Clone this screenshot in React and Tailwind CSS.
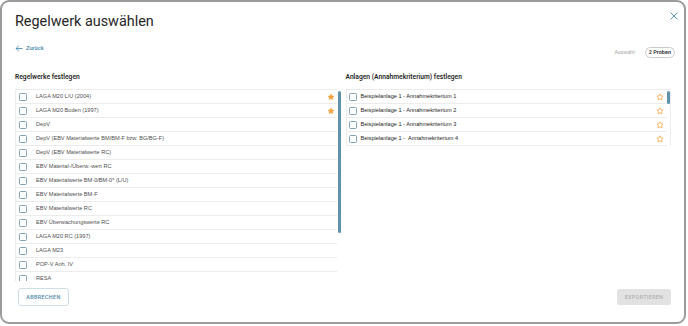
import React from "react";

// Dialog: Regelwerk auswählen

const REGELWERKE = [
  { name: "LAGA M20 L/U (2004)", fav: true },
  { name: "LAGA M20 Boden (1997)", fav: true },
  { name: "DepV" },
  { name: "DepV (EBV Materialwerte BM/BM-F bzw. BG/BG-F)" },
  { name: "DepV (EBV Materialwerte RC)" },
  { name: "EBV Material-/Überw.-wert RC" },
  { name: "EBV Materialwerte BM-0/BM-0* (L/U)" },
  { name: "EBV Materialwerte BM-F" },
  { name: "EBV Materialwerte RC" },
  { name: "EBV Überwachungswerte RC" },
  { name: "LAGA M20 RC (1997)" },
  { name: "LAGA M23" },
  { name: "POP-V Anh. IV" },
  { name: "RESA" },
];

const ANLAGEN = [
  "Beispielanlage 1 - Annahmekriterium 1",
  "Beispielanlage 1 - Annahmekriterium 2",
  "Beispielanlage 1 - Annahmekriterium 3",
  "Beispielanlage 1 - \u00a0Annahmekriterium 4",
];

const rowFont = { fontFamily: "'Liberation Sans', Arial, sans-serif" };

function Star({ filled }) {
  return (
    <svg width="8" height="8" viewBox="0 0 24 24" className="shrink-0">
      <path
        d="M12 2.5l2.9 6.1 6.6.8-4.9 4.6 1.3 6.6L12 17.3l-5.9 3.3 1.3-6.6-4.9-4.6 6.6-.8z"
        fill={filled ? "#f5a23e" : "none"}
        stroke="#f5a23e"
        strokeWidth={filled ? 1 : 2.2}
        strokeLinejoin="round"
      />
    </svg>
  );
}

function Checkbox() {
  return <span className="block h-[8px] w-[8px] shrink-0 rounded-[1.5px] border-[1.3px] border-[#7fa2b6] bg-white" />;
}

export default function App() {
  return (
    <div className="h-[326px] w-[688px] bg-white" style={{ fontFamily: "Roboto, 'Liberation Sans', sans-serif" }}>
      <div className="flex h-[324px] w-[686px] flex-col rounded-[9px] border-2 border-[#9b9b9b] bg-white px-[13px]">
        {/* Kopfzeile */}
        <div className="flex h-[40px] items-start justify-between">
          <h1 className="pt-[12px] text-[14.4px] leading-[16px] font-normal text-[#262626]">Regelwerk auswählen</h1>
          <svg width="8" height="8" viewBox="0 0 10 10" className="-mr-[7px] mt-[10px]">
            <path d="M1 1l8 8M9 1l-8 8" stroke="#4f97ac" strokeWidth="1.2" strokeLinecap="round" />
          </svg>
        </div>

        <div className="flex h-[16px] items-start justify-between">
          <div className="flex h-[12px] items-center gap-[3px] text-[5.7px] font-medium text-[#3f84ad]">
            <svg width="8" height="7" viewBox="0 0 10 8">
              <path d="M9 4H1.5M4.5 1L1.3 4l3.2 3" stroke="#3f84ad" strokeWidth="1" fill="none" strokeLinecap="round" strokeLinejoin="round" />
            </svg>
            Zurück
          </div>
          <div className="-mr-[4px] flex items-center gap-[9px] self-end">
            <span className="text-[5.3px] text-[#a5a5a5]">Auswahl:</span>
            <span className="flex h-[11px] items-center rounded-full border border-[#c9c9c9] px-[3px] text-[5.5px] font-semibold text-[#333]">2 Proben</span>
          </div>
        </div>

        <div className="mt-[14px] grid grid-cols-2 gap-[5px]">
          {/* Regelwerke */}
          <div>
            <h2 className="text-[6.7px] leading-[10px] font-semibold text-[#2a2a2a]">Regelwerke festlegen</h2>
            <div className="mt-[7px] flex h-[192px] overflow-hidden">
              <div className="flex-1 border-l border-t border-[#ececec]">
                {REGELWERKE.map((r) => (
                  <div key={r.name} className="flex h-[14px] items-center border-b border-[#ececec] pr-[2px] pl-[3px]">
                    <Checkbox />
                    <span className="ml-[9px] flex-1 text-[5.6px] text-[#505050]" style={rowFont}>{r.name}</span>
                    {r.fav && <Star filled />}
                  </div>
                ))}
              </div>
              <div className="w-[4px] pl-[1px]">
                <div className="mt-[2px] h-[142px] w-[3px] rounded-full bg-[#5f93ab]" />
              </div>
            </div>
          </div>

          {/* Anlagen */}
          <div>
            <h2 className="text-[6.7px] leading-[10px] font-semibold text-[#2a2a2a]">Anlagen (Annahmekriterium) festlegen</h2>
            <div className="mt-[7px] flex border-l border-r border-t border-[#ececec]">
              <div className="flex-1">
                {ANLAGEN.map((a) => (
                  <div key={a} className="flex h-[14px] items-center border-b border-[#ececec] pr-[3px] pl-[2px]">
                    <Checkbox />
                    <span className="ml-[4px] flex-1 text-[5.6px] whitespace-pre text-[#262626]" style={rowFont}>{a}</span>
                    <Star />
                  </div>
                ))}
              </div>
              <div className="w-[3px]">
                <div className="mt-[1px] h-[13px] w-[3px] rounded-full bg-[#5f93ab]" />
              </div>
            </div>
          </div>
        </div>

        {/* Aktionen */}
        <div className="mt-[7px] flex items-start justify-between">
          <button className="ml-[3px] flex h-[18px] w-[51px] items-center justify-center rounded-[3px] border border-[#cfdde4] text-[5.5px] font-medium tracking-[0.3px] text-[#4d8aa8]">
            ABBRECHEN
          </button>
          <button className="mt-[1px] flex h-[16px] w-[54px] items-center justify-center rounded-[2px] bg-[#e2e2e2] text-[5.5px] tracking-[0.3px] text-[#a9a9a9]">
            EXPORTIEREN
          </button>
        </div>
      </div>
    </div>
  );
}
